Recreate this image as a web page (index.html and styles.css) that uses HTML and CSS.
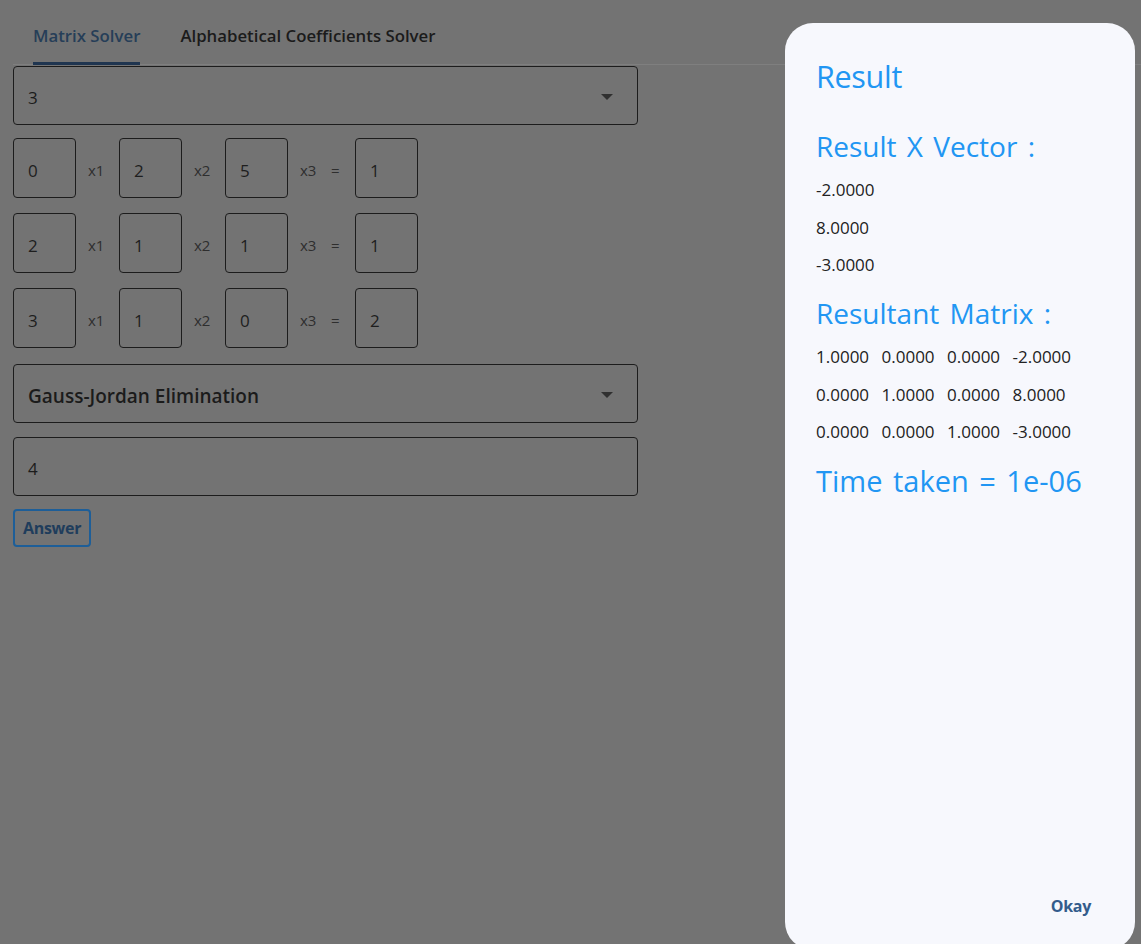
FILE: index.html
```html
<!DOCTYPE html>
<html lang="en">
<head>
<meta charset="utf-8">
<title>Matrix Solver</title>
<link rel="stylesheet" href="styles.css">
</head>
<body>
<div class="page">
  <nav class="tabs">
    <div class="tab active"><span class="tab-label">Matrix Solver</span></div>
    <div class="tab"><span class="tab-label">Alphabetical Coefficients Solver</span></div>
  </nav>
  <main class="form">
    <div class="field select size"><span class="value">3</span><span class="caret"></span></div>
    <div class="equation">
      <div class="cell">0</div><span class="var">x1</span>
      <div class="cell">2</div><span class="var">x2</span>
      <div class="cell">5</div><span class="var">x3</span><span class="eq">=</span>
      <div class="cell">1</div>
    </div>
    <div class="equation">
      <div class="cell">2</div><span class="var">x1</span>
      <div class="cell">1</div><span class="var">x2</span>
      <div class="cell">1</div><span class="var">x3</span><span class="eq">=</span>
      <div class="cell">1</div>
    </div>
    <div class="equation">
      <div class="cell">3</div><span class="var">x1</span>
      <div class="cell">1</div><span class="var">x2</span>
      <div class="cell">0</div><span class="var">x3</span><span class="eq">=</span>
      <div class="cell">2</div>
    </div>
    <div class="field select method"><span class="value">Gauss-Jordan Elimination</span><span class="caret"></span></div>
    <div class="field"><span class="value">4</span></div>
    <div><button class="answer">Answer</button></div>
  </main>
</div>

<div class="overlay">
  <section class="dialog">
    <h1 class="dialog-title">Result</h1>
    <h2 class="section-title vector-title">Result X Vector :</h2>
    <div class="line">-2.0000</div>
    <div class="line">8.0000</div>
    <div class="line">-3.0000</div>
    <h2 class="section-title matrix-title">Resultant Matrix :</h2>
    <div class="mrow"><span>1.0000</span><span>0.0000</span><span>0.0000</span><span>-2.0000</span></div>
    <div class="mrow"><span>0.0000</span><span>1.0000</span><span>0.0000</span><span>8.0000</span></div>
    <div class="mrow"><span>0.0000</span><span>0.0000</span><span>1.0000</span><span>-3.0000</span></div>
    <h2 class="section-title time">Time taken = 1e-06</h2>
    <div class="actions"><button class="okay">Okay</button></div>
  </section>
</div>
</body>
</html>
```

FILE: styles.css
```css
* { box-sizing: border-box; }

html, body {
  margin: 0;
  height: 100%;
}

body {
  background: #737373;
  font-family: "Open Sans", "Noto Sans", sans-serif;
  color: #1b1b1b;
  overflow: hidden;
}

.page {
  padding-left: 13px;
}

.tabs {
  display: flex;
  height: 65px;
  border-bottom: 1px solid #7f7f7f;
}

.tab {
  padding: 0 20px;
  display: flex;
  align-items: stretch;
  font-size: 16.8px;
  font-weight: 600;
  color: #1b1b1b;
}

.tab-label {
  display: flex;
  align-items: flex-end;
  line-height: 23px;
  padding-bottom: 15px;
  border-bottom: 3px solid transparent;
  position: relative;
  top: 1px;
}

.tab.active .tab-label {
  color: #263e58;
  border-bottom-color: #1f3550;
  border-radius: 3px 3px 0 0;
}

.form {
  width: 625px;
  display: flex;
  flex-direction: column;
  padding-top: 1px;
}

.field {
  height: 59px;
  border: 1.5px solid #1c1c1c;
  border-radius: 4px;
  display: flex;
  align-items: center;
  padding: 4px 14px 0;
  font-size: 17px;
  margin-bottom: 14px;
}

.size {
  margin-bottom: 13px;
}

.select {
  justify-content: space-between;
}

.method {
  margin-top: 1px;
}

.method .value {
  font-weight: 600;
  font-size: 19px;
}

.field.last {
  margin-bottom: 13px;
}

.caret {
  width: 0;
  height: 0;
  border-left: 6px solid transparent;
  border-right: 6px solid transparent;
  border-top: 6px solid #303030;
  margin-right: 10px;
  margin-top: -2px;
}

.equation {
  display: flex;
  align-items: center;
  height: 60px;
  margin-bottom: 15px;
}

.cell {
  flex: none;
  width: 63px;
  height: 60px;
  border: 1.5px solid #1c1c1c;
  border-radius: 4px;
  display: flex;
  align-items: center;
  padding: 4px 0 0 14px;
  font-size: 17px;
  color: #1e1e1e;
}

.var {
  flex: none;
  font-size: 15px;
  color: #2e2e2e;
  width: 43px;
  padding-left: 12px;
  padding-top: 4px;
}

.eq {
  flex: none;
  font-size: 15px;
  color: #2e2e2e;
  width: 24px;
  padding-top: 4px;
}

.answer {
  font-family: inherit;
  font-size: 16px;
  font-weight: 700;
  letter-spacing: -0.3px;
  color: #1f3d5c;
  background: transparent;
  border: 2px solid #1d5e98;
  border-radius: 4px;
  padding: 0 8px;
  height: 38px;
  margin-top: -1px;
}

.overlay {
  position: fixed;
  inset: 0;
  pointer-events: none;
}

.dialog {
  position: absolute;
  left: 785px;
  top: 23px;
  width: 350px;
  height: 927px;
  background: #f7f8fd;
  border-radius: 28px;
  padding: 30px 31px 0;
  display: flex;
  flex-direction: column;
  color: #222;
}

.dialog-title {
  margin: 0;
  font-size: 30.5px;
  font-weight: 400;
  color: #2196f3;
  line-height: 46px;
  letter-spacing: -0.3px;
}

.section-title {
  margin: 0 0 5px;
  font-size: 28px;
  font-weight: 400;
  color: #2196f3;
  line-height: 40px;
  word-spacing: 3px;
}

.vector-title {
  margin-top: 27px;
}

.line {
  font-size: 17px;
  line-height: 37.5px;
}

.matrix-title {
  margin-top: 9.5px;
}

.mrow {
  display: flex;
  font-size: 17px;
  line-height: 37.5px;
}

.mrow span {
  width: 65.5px;
}

.time {
  margin-top: 10.5px;
  font-size: 29px;
}

.actions {
  margin-top: auto;
  margin-bottom: 24px;
  display: flex;
  justify-content: flex-end;
}

.okay {
  font-family: inherit;
  font-size: 16px;
  font-weight: 700;
  letter-spacing: -0.3px;
  color: #335c8c;
  background: transparent;
  border: none;
  padding: 0 13px;
  height: 40px;
}
```
